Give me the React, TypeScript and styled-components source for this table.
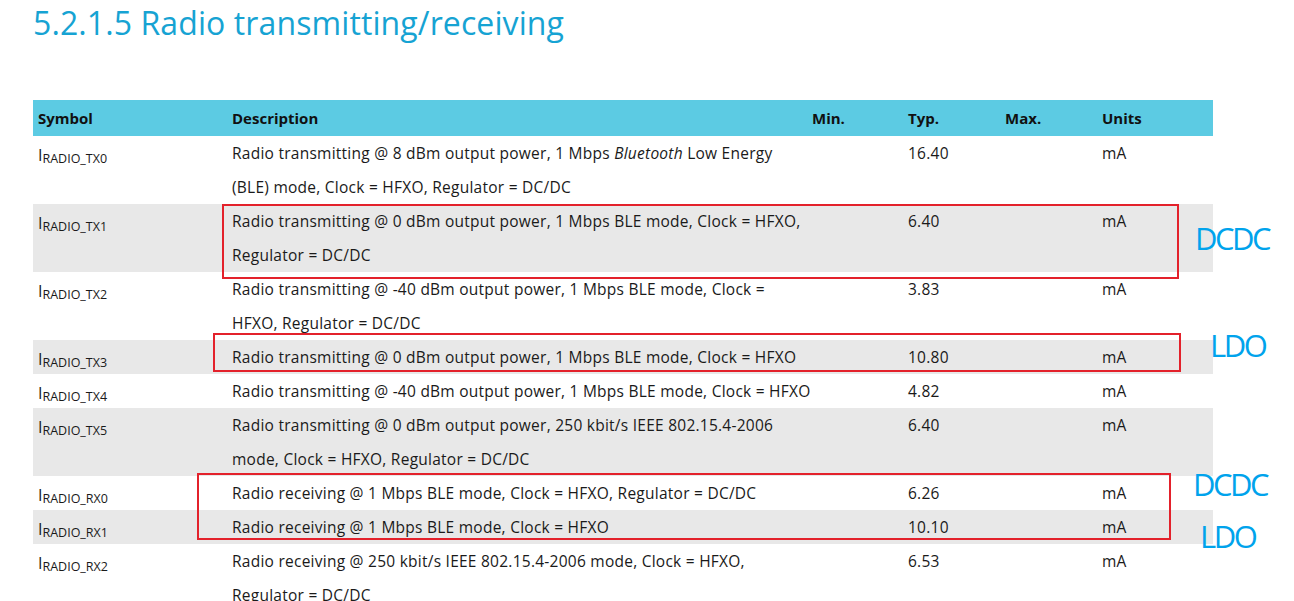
import React from "react";
import styled, { createGlobalStyle } from "styled-components";

const GlobalStyle = createGlobalStyle`
  html, body {
    margin: 0;
    padding: 0;
    overflow: hidden;
    background: #ffffff;
  }
  body {
    font-family: "Open Sans", "Noto Sans", sans-serif;
    color: #1a1a1a;
  }
`;

const Page = styled.div`
  display: flex;
  flex-direction: column;
  gap: 55px;
  padding: 1px 0 0 33px;
  width: 1294px;
  height: 601px;
  box-sizing: border-box;
`;

const Title = styled.h1`
  margin: 0;
  font-family: "Open Sans", "Noto Sans", sans-serif;
  font-weight: 400;
  font-size: 32px;
  line-height: 44px;
  color: #16a3d3;
  letter-spacing: 0.1px;
`;

const TableWrap = styled.div`
  position: relative;
  width: 1180px;
`;

const Table = styled.div`
  display: flex;
  flex-direction: column;
`;

const columns = "194px 580px 96px 97px 97px 116px";

const HeaderRow = styled.div`
  display: grid;
  grid-template-columns: ${columns};
  height: 36px;
  background: #5ccbe3;
  align-items: center;
  font-size: 15px;
  font-weight: 700;
  color: #111;
`;

const HeadCell = styled.div`
  padding-left: 5px;
  white-space: nowrap;
`;

const DataRow = styled.div<{ $grey: boolean }>`
  display: grid;
  grid-template-columns: ${columns};
  background: ${(p) => (p.$grey ? "#e8e8e8" : "#ffffff")};
  font-size: 15.5px;
  letter-spacing: 0.25px;
  line-height: 34px;
`;

const Cell = styled.div`
  padding-left: 5px;
  white-space: nowrap;
`;

const SymbolCell = styled(Cell)`
  letter-spacing: 0;
`;

const SymMain = styled.span`
  font-size: 16px;
  line-height: 16px;
  vertical-align: -2px;
`;

const SymSub = styled.span`
  font-size: 12.5px;
  line-height: 12px;
  vertical-align: -4px;
`;

const Line = styled.div`
  height: 34px;
`;

const Mark = styled.div<{ $l: number; $t: number; $w: number; $h: number }>`
  position: absolute;
  left: ${(p) => p.$l}px;
  top: ${(p) => p.$t}px;
  width: ${(p) => p.$w}px;
  height: ${(p) => p.$h}px;
  border: 2px solid #e3212b;
  box-sizing: border-box;
  pointer-events: none;
`;

const Note = styled.div<{ $l: number; $t: number }>`
  position: absolute;
  left: ${(p) => p.$l}px;
  top: ${(p) => p.$t}px;
  font-family: "Open Sans", "Noto Sans", sans-serif;
  font-size: 31px;
  line-height: 31px;
  letter-spacing: -2.5px;
  color: #00a3ec;
  white-space: nowrap;
`;

type Row = {
  sub: string;
  lines: React.ReactNode[];
  typ: string;
};

const rows: Row[] = [
  {
    sub: "RADIO_TX0",
    lines: [
      <>
        Radio transmitting @ 8 dBm output power, 1 Mbps <i>Bluetooth</i> Low Energy
      </>,
      "(BLE) mode, Clock = HFXO, Regulator = DC/DC",
    ],
    typ: "16.40",
  },
  {
    sub: "RADIO_TX1",
    lines: [
      "Radio transmitting @ 0 dBm output power, 1 Mbps BLE mode, Clock = HFXO,",
      "Regulator = DC/DC",
    ],
    typ: "6.40",
  },
  {
    sub: "RADIO_TX2",
    lines: [
      "Radio transmitting @ -40 dBm output power, 1 Mbps BLE mode, Clock =",
      "HFXO, Regulator = DC/DC",
    ],
    typ: "3.83",
  },
  {
    sub: "RADIO_TX3",
    lines: ["Radio transmitting @ 0 dBm output power, 1 Mbps BLE mode, Clock = HFXO"],
    typ: "10.80",
  },
  {
    sub: "RADIO_TX4",
    lines: ["Radio transmitting @ -40 dBm output power, 1 Mbps BLE mode, Clock = HFXO"],
    typ: "4.82",
  },
  {
    sub: "RADIO_TX5",
    lines: [
      "Radio transmitting @ 0 dBm output power, 250 kbit/s IEEE 802.15.4-2006",
      "mode, Clock = HFXO, Regulator = DC/DC",
    ],
    typ: "6.40",
  },
  {
    sub: "RADIO_RX0",
    lines: ["Radio receiving @ 1 Mbps BLE mode, Clock = HFXO, Regulator = DC/DC"],
    typ: "6.26",
  },
  {
    sub: "RADIO_RX1",
    lines: ["Radio receiving @ 1 Mbps BLE mode, Clock = HFXO"],
    typ: "10.10",
  },
  {
    sub: "RADIO_RX2",
    lines: [
      "Radio receiving @ 250 kbit/s IEEE 802.15.4-2006 mode, Clock = HFXO,",
      "Regulator = DC/DC",
    ],
    typ: "6.53",
  },
];

const headers = ["Symbol", "Description", "Min.", "Typ.", "Max.", "Units"];

export default function App() {
  return (
    <>
      <GlobalStyle />
      <Page>
        <Title>5.2.1.5 Radio transmitting/receiving</Title>
        <TableWrap>
          <Table>
            <HeaderRow>
              {headers.map((h) => (
                <HeadCell key={h}>{h}</HeadCell>
              ))}
            </HeaderRow>
            {rows.map((r, i) => (
              <DataRow key={r.sub} $grey={i % 2 === 1}>
                <SymbolCell>
                  <SymMain>I</SymMain>
                  <SymSub>{r.sub}</SymSub>
                </SymbolCell>
                <Cell>
                  {r.lines.map((l, j) => (
                    <Line key={j}>{l}</Line>
                  ))}
                </Cell>
                <Cell />
                <Cell>{r.typ}</Cell>
                <Cell />
                <Cell>mA</Cell>
              </DataRow>
            ))}
          </Table>
          <Mark $l={189} $t={104} $w={957} $h={75} />
          <Mark $l={180} $t={233} $w={968} $h={39} />
          <Mark $l={164} $t={373} $w={974} $h={67} />
          <Note $l={1162} $t={123}>DCDC</Note>
          <Note $l={1177} $t={230}>LDO</Note>
          <Note $l={1160} $t={369}>DCDC</Note>
          <Note $l={1167} $t={421}>LDO</Note>
        </TableWrap>
      </Page>
    </>
  );
}
